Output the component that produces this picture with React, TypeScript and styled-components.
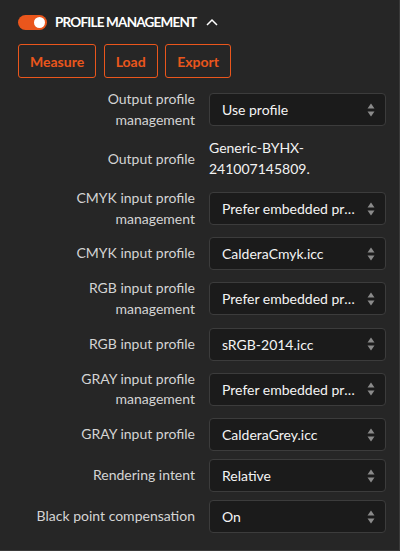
import React from "react";
import styled, { createGlobalStyle } from "styled-components";

const Global = createGlobalStyle`
  html, body { margin: 0; padding: 0; background: #262626; }
  * { box-sizing: border-box; }
`;

const ORANGE = "#ea561c";

const Panel = styled.div`
  width: 400px;
  height: 551px;
  background: #262626;
  border-right: 1px solid #3a3a3a;
  border-bottom: 1px solid #3a3a3a;
  padding: 8px 13px 0 18px;
  font-family: Lato, "Open Sans", sans-serif;
  font-size: 14px;
  color: #d2d2d2;
`;

const Header = styled.div`
  height: 28px;
  display: flex;
  align-items: center;
  gap: 8px;
`;

const Toggle = styled.div`
  width: 29px;
  height: 15px;
  border-radius: 8px;
  background: ${ORANGE};
  display: flex;
  align-items: center;
  justify-content: flex-end;
  padding-right: 2px;
`;

const Knob = styled.div`
  width: 11px;
  height: 11px;
  border-radius: 50%;
  background: #ffffff;
`;

const Title = styled.span`
  font-weight: 700;
  font-size: 13.5px;
  color: #ffffff;
  letter-spacing: -0.8px;
  margin-right: 2px;
`;

const Buttons = styled.div`
  display: flex;
  gap: 7.5px;
  margin-top: 8px;
`;

const Btn = styled.button`
  height: 34px;
  padding: 0 11px;
  background: transparent;
  border: 1.5px solid ${ORANGE};
  border-radius: 3px;
  color: ${ORANGE};
  font-family: inherit;
  font-size: 14px;
  font-weight: 700;
`;

const Grid = styled.div`
  display: grid;
  grid-template-columns: 177px 177px;
  column-gap: 14px;
  row-gap: 8px;
  align-items: center;
  margin-top: 11px;
`;

const Label = styled.div`
  text-align: right;
  line-height: 20.7px;
  color: #d4d4d4;
`;

const Value = styled.div`
  line-height: 20.7px;
  color: #f2f2f2;
`;

const SelectBox = styled.div`
  height: 33px;
  border: 1px solid #3c3c3c;
  border-radius: 4px;
  background: #1b1b1b;
  display: flex;
  align-items: center;
  padding: 0 10px 0 12px;
  color: #f4f4f4;
`;

const SelectText = styled.span`
  flex: 1;
  white-space: nowrap;
  overflow: hidden;
  text-overflow: ellipsis;
  padding-right: 8px;
`;

const Arrows = () => (
  <svg width="8" height="14" viewBox="0 0 8 14">
    <path d="M4 0.5 L7.5 5.5 L0.5 5.5 Z" fill="#8a8a8a" />
    <path d="M4 13.5 L7.5 8.5 L0.5 8.5 Z" fill="#8a8a8a" />
  </svg>
);

const Chevron = () => (
  <svg width="12" height="8" viewBox="0 0 12 8">
    <path d="M1 7 L6 2 L11 7" fill="none" stroke="#ffffff" strokeWidth="1.5" />
  </svg>
);

type Row = { label: React.ReactNode; select?: string; value?: React.ReactNode };

const rows: Row[] = [
  { label: <>Output profile<br />management</>, select: "Use profile" },
  { label: "Output profile", value: "Generic-BYHX-241007145809." },
  { label: <>CMYK input profile<br />management</>, select: "Prefer embedded profile" },
  { label: "CMYK input profile", select: "CalderaCmyk.icc" },
  { label: <>RGB input profile<br />management</>, select: "Prefer embedded profile" },
  { label: "RGB input profile", select: "sRGB-2014.icc" },
  { label: <>GRAY input profile<br />management</>, select: "Prefer embedded profile" },
  { label: "GRAY input profile", select: "CalderaGrey.icc" },
  { label: "Rendering intent", select: "Relative" },
  { label: "Black point compensation", select: "On" },
];

export default function App() {
  return (
    <>
      <Global />
      <Panel>
        <Header>
          <Toggle>
            <Knob />
          </Toggle>
          <Title>PROFILE MANAGEMENT</Title>
          <Chevron />
        </Header>
        <Buttons>
          <Btn>Measure</Btn>
          <Btn>Load</Btn>
          <Btn>Export</Btn>
        </Buttons>
        <Grid>
          {rows.map((r, i) => (
            <React.Fragment key={i}>
              <Label>{r.label}</Label>
              {r.select !== undefined ? (
                <SelectBox>
                  <SelectText>{r.select}</SelectText>
                  <Arrows />
                </SelectBox>
              ) : (
                <Value>{r.value}</Value>
              )}
            </React.Fragment>
          ))}
        </Grid>
      </Panel>
    </>
  );
}
